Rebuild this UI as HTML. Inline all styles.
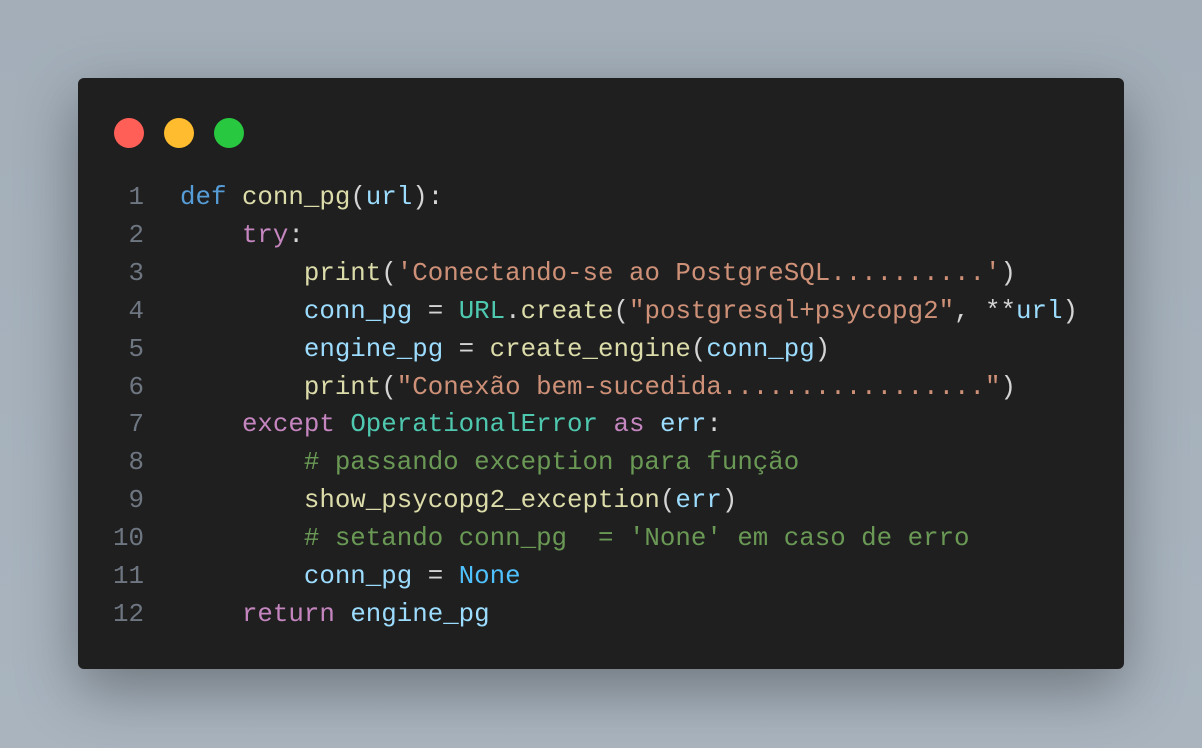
<!DOCTYPE html>
<html><head><meta charset="utf-8"><style>
body{margin:0;width:1202px;height:748px;background:linear-gradient(180deg,#a3aeb9,#a9b4bf);overflow:hidden;position:relative;font-family:"Liberation Mono",monospace}
.card{position:absolute;left:78px;top:78px;width:1046px;height:591px;background:#1f1f1f;border-radius:6px;box-shadow:0 20px 60px rgba(0,0,0,.35)}
.dot{position:absolute;top:118px;width:30px;height:30px;border-radius:50%}
.code{position:absolute;left:0;top:179px;font-size:25.8px;line-height:37.9px;white-space:pre;color:#d4d4d4}
.ln{display:inline-block;width:144px;text-align:right;color:#6e7681;margin-right:36px}
.k{color:#569cd6}.f{color:#dcdcaa}.v{color:#9cdcfe}.p{color:#c586c0}.s{color:#ce9178}.c{color:#6a9955}.t{color:#4ec9b0}.n{color:#4fc1ff}
</style></head><body>
<div class="card"></div>
<div class="dot" style="left:114px;background:#ff5f57"></div>
<div class="dot" style="left:164px;background:#febc2e"></div>
<div class="dot" style="left:214px;background:#28c840"></div>
<div class="code"><span class="ln">1</span><span class="k">def</span> <span class="f">conn_pg</span>(<span class="v">url</span>):
<span class="ln">2</span>    <span class="p">try</span>:
<span class="ln">3</span>        <span class="f">print</span>(<span class="s">'Conectando-se ao PostgreSQL..........'</span>)
<span class="ln">4</span>        <span class="v">conn_pg</span> = <span class="t">URL</span>.<span class="f">create</span>(<span class="s">"postgresql+psycopg2"</span>, **<span class="v">url</span>)
<span class="ln">5</span>        <span class="v">engine_pg</span> = <span class="f">create_engine</span>(<span class="v">conn_pg</span>)
<span class="ln">6</span>        <span class="f">print</span>(<span class="s">"Conexão bem-sucedida................."</span>)
<span class="ln">7</span>    <span class="p">except</span> <span class="t">OperationalError</span> <span class="p">as</span> <span class="v">err</span>:
<span class="ln">8</span>        <span class="c"># passando exception para função</span>
<span class="ln">9</span>        <span class="f">show_psycopg2_exception</span>(<span class="v">err</span>)
<span class="ln">10</span>        <span class="c"># setando conn_pg  = 'None' em caso de erro</span>
<span class="ln">11</span>        <span class="v">conn_pg</span> = <span class="n">None</span>
<span class="ln">12</span>    <span class="p">return</span> <span class="v">engine_pg</span></div>
</body></html>
